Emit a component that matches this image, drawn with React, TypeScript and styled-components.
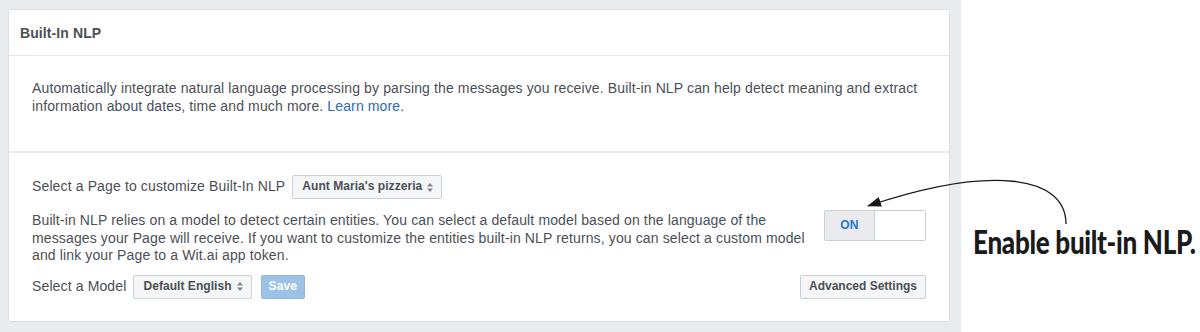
import React from "react";
import styled, { createGlobalStyle } from "styled-components";

const Global = createGlobalStyle`
  html, body { margin: 0; padding: 0; background: #ffffff; }
  body { font-family: "Liberation Sans", Arial, sans-serif; -webkit-font-smoothing: antialiased; }
  * { box-sizing: border-box; }
`;

const Page = styled.div`
  position: relative;
  display: flex;
  width: 1200px;
  height: 332px;
  overflow: hidden;
`;

const GreyPanel = styled.div`
  width: 961px;
  flex: none;
  background: #e9ebee;
  padding: 9px 11px 10px 8px;
`;

const Card = styled.div`
  background: #ffffff;
  border: 1px solid #dddfe2;
  border-radius: 3px;
  height: 100%;
  display: flex;
  flex-direction: column;
  color: #4b4f56;
`;

const CardHeader = styled.div`
  height: 46px;
  display: flex;
  align-items: center;
  padding: 0 11px;
  border-bottom: 1px solid #e5e6e9;
  font-weight: bold;
  font-size: 14px;
  letter-spacing: 0.1px;
  color: #4b4f56;
`;

const Section = styled.div<{ $divider?: boolean }>`
  padding: ${(p) => (p.$divider ? "22px 23px 0 23px" : "24px 23px 0 23px")};
  border-top: ${(p) => (p.$divider ? "2px solid #e9eaed" : "none")};
  font-size: 14px;
  line-height: 17.5px;
  letter-spacing: 0.13px;
`;

const Intro = styled(Section)`
  height: 95px;
`;

const Para = styled.p<{ $w?: number }>`
  margin: 0;
  max-width: ${(p) => (p.$w ? `${p.$w}px` : "none")};
`;

const Link = styled.a`
  color: #2a6cb5;
  text-decoration: none;
`;

const Row = styled.div<{ $mt?: number }>`
  display: flex;
  align-items: center;
  margin-top: ${(p) => p.$mt ?? 0}px;
`;

const Label = styled.span`
  margin-right: 7px;
`;

const SelectBox = styled.div`
  height: 24px;
  display: inline-flex;
  align-items: center;
  gap: 5px;
  padding: 0 8px 0 9px;
  background: #f5f6f7;
  border: 1px solid #ccd0d5;
  border-radius: 2px;
  font-size: 12px;
  font-weight: bold;
  letter-spacing: 0.05px;
  color: #4b4f56;
`;

const SaveButton = styled.div`
  height: 24px;
  display: inline-flex;
  align-items: center;
  padding: 0 7px;
  margin-left: 9px;
  background: #9cc3e6;
  border: 1px solid #8fb9df;
  border-radius: 2px;
  font-size: 12px;
  font-weight: bold;
  color: #ffffff;
`;

const GhostButton = styled(SelectBox)`
  margin-left: auto;
  padding: 0 8px;
  letter-spacing: 0;
`;

const ToggleRow = styled.div`
  display: flex;
  align-items: flex-start;
  justify-content: space-between;
  margin-top: 13px;
`;

const Toggle = styled.div`
  width: 102px;
  height: 31px;
  display: flex;
  border: 1px solid #ccd0d5;
  border-radius: 2px;
  margin-top: -2px;
  overflow: hidden;
  flex: none;
`;

const ToggleOn = styled.div`
  width: 50px;
  background: #e9ebee;
  border-right: 1px solid #ccd0d5;
  display: flex;
  align-items: center;
  justify-content: center;
  font-size: 12px;
  font-weight: bold;
  color: #1f76d2;
`;

const ToggleOff = styled.div`
  flex: 1;
  background: #ffffff;
`;

const AnnotationArea = styled.div`
  flex: 1;
  min-width: 0;
  padding: 225px 0 0 12px;
`;

const Annotation = styled.div`
  font-family: Lato, "DejaVu Sans", sans-serif;
  font-weight: 900;
  font-size: 33px;
  line-height: 33px;
  letter-spacing: -0.4px;
  color: #1a1a1a;
  white-space: nowrap;
  width: 227px;
  transform: scaleX(0.79);
  transform-origin: left center;
`;

const ArrowLayer = styled.svg`
  position: absolute;
  left: 0;
  top: 0;
  pointer-events: none;
`;

const UpDown = () => (
  <svg width="6" height="9" viewBox="0 0 6 9">
    <path d="M3 0 L6 3.5 L0 3.5 Z M3 9 L6 5.5 L0 5.5 Z" fill="#7f8590" />
  </svg>
);

export default function App() {
  return (
    <>
      <Global />
      <Page>
        <GreyPanel>
          <Card>
            <CardHeader>Built-In NLP</CardHeader>
            <Intro>
              <Para $w={895}>
                Automatically integrate natural language processing by parsing the messages you receive. Built-in NLP
                can help detect meaning and extract information about dates, time and much more.{" "}
                <Link href="#">Learn more.</Link>
              </Para>
            </Intro>
            <Section $divider>
              <Row>
                <Label>Select a Page to customize Built-In NLP</Label>
                <SelectBox>
                  Aunt Maria's pizzeria <UpDown />
                </SelectBox>
              </Row>
              <ToggleRow>
                <Para $w={782}>
                  Built-in NLP relies on a model to detect certain entities. You can select a default model based on the
                  language of the messages your Page will receive. If you want to customize the entities built-in NLP
                  returns, you can select a custom model and link your Page to a Wit.ai app token.
                </Para>
                <Toggle>
                  <ToggleOn>ON</ToggleOn>
                  <ToggleOff />
                </Toggle>
              </ToggleRow>
              <Row $mt={10}>
                <Label>Select a Model</Label>
                <SelectBox>
                  Default English <UpDown />
                </SelectBox>
                <SaveButton>Save</SaveButton>
                <GhostButton>Advanced Settings</GhostButton>
              </Row>
            </Section>
          </Card>
        </GreyPanel>
        <AnnotationArea>
          <Annotation>Enable built-in NLP.</Annotation>
        </AnnotationArea>
        <ArrowLayer width="1200" height="332" viewBox="0 0 1200 332">
          <defs>
            <marker id="ah" markerWidth="14" markerHeight="10" refX="13" refY="5" orient="auto" markerUnits="userSpaceOnUse">
              <path d="M0 0 L14 5 L0 10 Z" fill="#1a1a1a" />
            </marker>
          </defs>
          <path d="M1066 224 C1066 175 990 165 868 206" stroke="#1a1a1a" strokeWidth="1.3" fill="none" markerEnd="url(#ah)" />
        </ArrowLayer>
      </Page>
    </>
  );
}
